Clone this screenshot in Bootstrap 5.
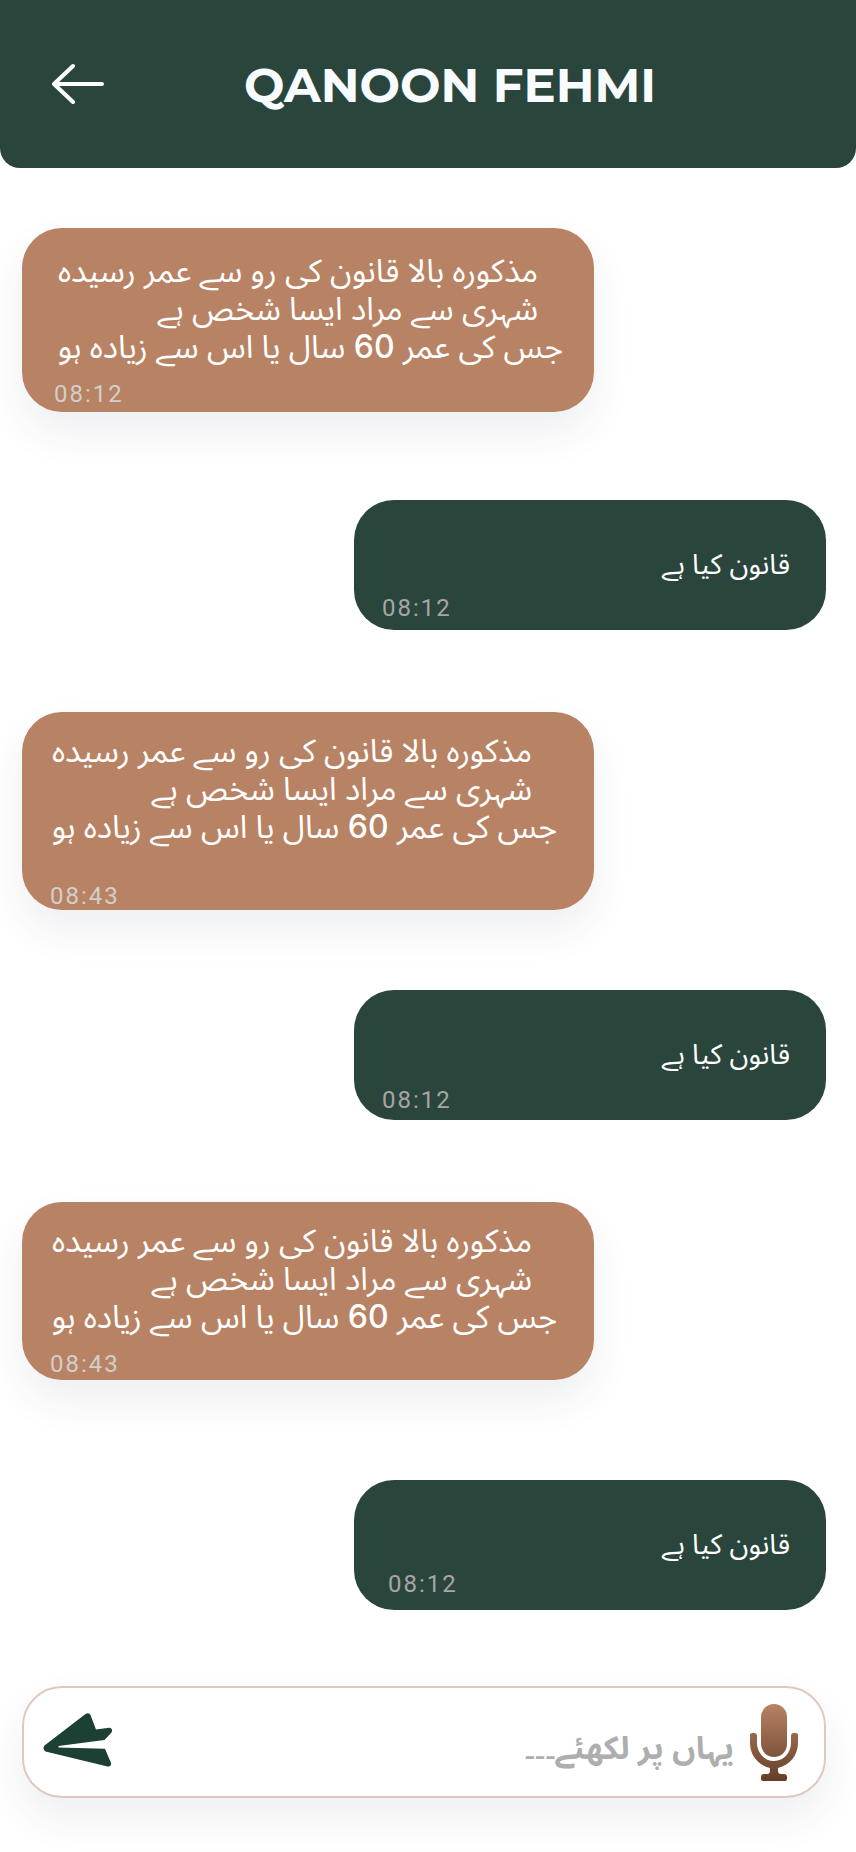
<!DOCTYPE html>
<html lang="ur">
<head>
<meta charset="utf-8">
<meta name="viewport" content="width=device-width, initial-scale=1">
<title>Qanoon Fehmi</title>
<link href="https://cdn.jsdelivr.net/npm/bootstrap@5.3.0/dist/css/bootstrap.min.css" rel="stylesheet">
<style>
  :root { --forest: #2a453c; --clay: #b88264; --lift: 0 20px 40px rgba(34, 50, 72, .08); }
  body { background: #fff; font-family: "Noto Sans Arabic", "DejaVu Sans", sans-serif; }
  .app-bar { background: var(--forest); border-radius: 0 0 20px 20px; padding: 57px 60px 55px 52px; }
  .app-title { color: #f8fbff; font: 700 48px/56px Montserrat, Inter, sans-serif; }
  .chat-area { padding: 60px 30px 54px 22px; }
  .bubble { border-radius: 40px; color: #fff; max-width: 100%; }
  .bubble-in { background: var(--clay); width: 572px; min-height: 178px; padding: 21px 37px 2px 28px; box-shadow: var(--lift); }
  .bubble-in.roomy { min-height: 198px; padding-bottom: 0; }
  .bubble-in.first { min-height: 184px; padding: 25px 31px 4px 32px; }
  .bubble-out { background: var(--forest); width: 472px; min-height: 130px; padding: 49px 36px 8px 28px; }
  .bubble-out.low { padding-bottom: 6px; }
  .bubble-out.inset { padding-left: 34px; padding-bottom: 12px; }
  .answer { font-size: 32px; line-height: 38px; }
  .answer .indent { padding-right: 25px; }
  .answer .num { font-family: Inter, sans-serif; font-weight: 500; line-height: 1; }
  .question { font-size: 28px; line-height: 34px; }
  .stamp { font: 400 24px/28px Roboto, sans-serif; letter-spacing: 2px; color: #d2cfcb; }
  .bubble-out .stamp { color: #a6a6a6; }
  .space-s { margin-top: 80px; }
  .space-n { margin-top: 82px; }
  .space-m { margin-top: 88px; }
  .space-l { margin-top: 100px; }
  .composer { margin-top: 76px; height: 112px; border: 2px solid #e0c8bc; border-radius: 40px; background: #fff; padding: 0 26px 0 19px; box-shadow: var(--lift); }
  .composer input { font-size: 32px; font-weight: 700; line-height: 48px; padding: 14px 16px 0 12px; }
  .composer input::placeholder { color: #aeaeae; opacity: 1; }
</style>
</head>
<body>
<header class="app-bar d-flex align-items-center">
  <button type="button" class="btn p-0 border-0 d-flex flex-shrink-0" aria-label="Back">
    <svg width="52" height="44" viewBox="0 0 52 44" fill="none" stroke="#fff" stroke-width="4" stroke-linecap="round" stroke-linejoin="round"><path d="M50 21H2M21 3L2 21L21 39"/></svg>
  </button>
  <h1 class="app-title flex-grow-1 text-center m-0" dir="ltr">QANOON FEHMI</h1>
</header>
<main class="chat-area d-flex flex-column">
  <article class="bubble bubble-in first d-flex flex-column justify-content-between">
    <p class="answer m-0" dir="rtl"><span class="d-block indent">مذکورہ بالا قانون کی رو سے عمر رسیدہ</span><span class="d-block indent">شہری سے مراد ایسا شخص ہے</span><span class="d-block">جس کی عمر <span class="num">60</span> سال یا اس سے زیادہ ہو</span></p>
    <time class="stamp">08:12</time>
  </article>
  <article class="bubble bubble-out align-self-end space-m d-flex flex-column justify-content-between">
    <p class="question m-0" dir="rtl">قانون کیا ہے</p>
    <time class="stamp">08:12</time>
  </article>
  <article class="bubble bubble-in roomy space-n d-flex flex-column justify-content-between">
    <p class="answer m-0" dir="rtl"><span class="d-block indent">مذکورہ بالا قانون کی رو سے عمر رسیدہ</span><span class="d-block indent">شہری سے مراد ایسا شخص ہے</span><span class="d-block">جس کی عمر <span class="num">60</span> سال یا اس سے زیادہ ہو</span></p>
    <time class="stamp">08:43</time>
  </article>
  <article class="bubble bubble-out low align-self-end space-s d-flex flex-column justify-content-between">
    <p class="question m-0" dir="rtl">قانون کیا ہے</p>
    <time class="stamp">08:12</time>
  </article>
  <article class="bubble bubble-in space-n d-flex flex-column justify-content-between">
    <p class="answer m-0" dir="rtl"><span class="d-block indent">مذکورہ بالا قانون کی رو سے عمر رسیدہ</span><span class="d-block indent">شہری سے مراد ایسا شخص ہے</span><span class="d-block">جس کی عمر <span class="num">60</span> سال یا اس سے زیادہ ہو</span></p>
    <time class="stamp">08:43</time>
  </article>
  <article class="bubble bubble-out inset align-self-end space-l d-flex flex-column justify-content-between">
    <p class="question m-0" dir="rtl">قانون کیا ہے</p>
    <time class="stamp">08:12</time>
  </article>
  <form class="composer d-flex align-items-center">
    <button type="submit" class="btn p-0 border-0 d-flex flex-shrink-0" aria-label="Send">
      <svg width="70" height="58" viewBox="0 0 70 58" fill="#1c4033"><path d="M1.500 32.500L42.500 1Q46-1 47.500 2L53 16.500L66 14.800Q70.500 15.500 68.500 19.500L61.500 27L15.500 33V34.600L62 35.800L68 50Q68.500 54 64.500 53.500L2.500 38.500Q-1 36 1.500 32.500Z"/></svg>
    </button>
    <input type="text" dir="rtl" class="form-control border-0 shadow-none bg-transparent" aria-label="یہاں پر لکھئے" placeholder="یہاں پر لکھئے۔۔۔">
    <button type="button" class="btn p-0 border-0 d-flex flex-shrink-0" aria-label="Record">
      <svg width="48" height="80" viewBox="0 -2 48 80"><defs><linearGradient id="clay" x1="0" y1="0" x2="0" y2="78" gradientUnits="userSpaceOnUse"><stop stop-color="#b88264"/><stop offset="1" stop-color="#643d27"/></linearGradient></defs><rect x="11" width="26" height="53" rx="13" fill="url(#clay)"/><path d="M0 31Q0 29 2 29H4Q7 29 7 32V39C7 48 14 57 24 57S41 48 41 39V32Q41 29 44 29H46Q48 29 48 31V39C48 51 40 61 28 64V67Q28 70 31 70H34Q37 70 37 73V75Q37 77 35 77H13Q11 77 11 75V73Q11 70 14 70H17Q20 70 20 67V64C8 61 0 51 0 39Z" fill="url(#clay)"/></svg>
    </button>
  </form>
</main>
<script src="https://cdn.jsdelivr.net/npm/bootstrap@5.3.0/dist/js/bootstrap.bundle.min.js"></script>
</body>
</html>
